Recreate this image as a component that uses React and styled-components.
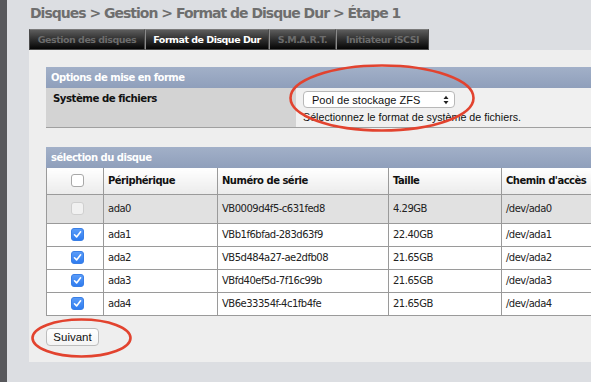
import styled, { createGlobalStyle } from 'styled-components';

const GlobalStyle = createGlobalStyle`
    html, body {
        margin: 0;
        padding: 0;
        background: #dcdee2;
        overflow: hidden;
        font-family: 'DejaVu Sans', Verdana, sans-serif;
    }
`;

const Page = styled.div`
    display: flex;
    width: 591px;
    height: 382px;
    overflow: hidden;
`;

const SideStrip = styled.div`
    width: 7px;
    flex: none;
    background: #58585c;
`;

const Main = styled.div`
    flex: none;
    width: 640px;
    padding-left: 22px;
    display: flex;
    flex-direction: column;
`;

const Title = styled.h1`
    margin: 0;
    height: 29px;
    padding: 5px 0 0 1px;
    box-sizing: border-box;
    font-size: 14px;
    font-weight: bold;
    letter-spacing: -1px;
    color: #6e6e6e;
    white-space: nowrap;
`;

const TabBar = styled.div`
    display: flex;
    height: 21px;
`;

const Tab = styled.div`
    width: ${(p) => p.w}px;
    box-sizing: border-box;
    border: 1px solid #4a4a4a;
    border-top-color: #7a7a7a;
    border-left-color: ${(p) => (p.first ? '#4a4a4a' : '#8a8a8a')};
    background: linear-gradient(#5c5c5c, #2a2a2a 55%, #050505);
    color: ${(p) => (p.active ? '#ffffff' : '#6c6c6c')};
    font-size: 9.5px;
    font-weight: bold;
    letter-spacing: -0.5px;
    display: flex;
    align-items: center;
    justify-content: center;
    white-space: nowrap;
`;

const Panel = styled.div`
    background: #eeeeee;
    height: 312px;
    box-sizing: border-box;
    padding: 17px 0 0 17px;
    display: flex;
    flex-direction: column;
    align-items: flex-start;
`;

const Section = styled.div`
    width: 600px;
    margin-bottom: ${(p) => p.mb || 0}px;
`;

const SectionHead = styled.div`
    height: 21px;
    background: linear-gradient(#a2b0c8, #8f9fbb);
    color: #ffffff;
    font-size: 10px;
    font-weight: bold;
    letter-spacing: -0.5px;
    padding-left: 5px;
    display: flex;
    align-items: center;
`;

const OptionRow = styled.div`
    display: flex;
    height: 40px;
    border-bottom: 1px solid #a0a0a0;
    box-sizing: border-box;
`;

const OptionLabel = styled.div`
    width: 250px;
    background: #d3d3d3;
    font-size: 10.2px;
    font-weight: bold;
    letter-spacing: -0.5px;
    color: #111;
    padding: 5px 0 0 7px;
    box-sizing: border-box;
`;

const OptionValue = styled.div`
    flex: 1;
    background: #f0f0f0;
    padding: 3px 0 0 7px;
    display: flex;
    flex-direction: column;
    align-items: flex-start;
`;

const Marked = styled.div`
    position: relative;
`;

const Ellipse = styled.svg`
    position: absolute;
    left: ${(p) => p.x}px;
    top: ${(p) => p.y}px;
    pointer-events: none;
    overflow: visible;
`;

const Select = styled.div`
    width: 152px;
    height: 17px;
    box-sizing: border-box;
    background: #ffffff;
    border: 1px solid #b8b8b8;
    border-radius: 4px;
    font-family: 'Liberation Sans', Arial, sans-serif;
    font-size: 11px;
    color: #111;
    padding: 0 5px 0 8px;
    display: flex;
    align-items: center;
    justify-content: space-between;
`;

const Hint = styled.div`
    margin-top: 3px;
    font-family: 'Liberation Sans', Arial, sans-serif;
    font-size: 10.7px;
    color: #111;
`;

const Table = styled.table`
    border-collapse: collapse;
    table-layout: fixed;
    width: 600px;
    font-size: 10px;
    letter-spacing: -0.5px;
    color: #222;
`;

const HeadCell = styled.th`
    border: 1px solid #9a9a9a;
    border-top: none;
    background: linear-gradient(#ffffff, #ebebeb);
    height: 26px;
    padding: 0 0 0 4px;
    text-align: ${(p) => (p.center ? 'center' : 'left')};
    font-weight: bold;
    color: #111;
    box-sizing: border-box;
`;

const Row = styled.tr`
    background: ${(p) => (p.disabled ? '#e1e1e1' : '#ffffff')};
    height: ${(p) => p.h}px;
`;

const Cell = styled.td`
    border: 1px solid #9a9a9a;
    padding: 0 0 0 4px;
    text-align: ${(p) => (p.center ? 'center' : 'left')};
    white-space: nowrap;
    overflow: hidden;
`;

const Box = styled.span`
    display: inline-flex;
    align-items: center;
    justify-content: center;
    vertical-align: middle;
    width: 13px;
    height: 13px;
    box-sizing: border-box;
    border-radius: 3px;
    border: 1px solid ${(p) => (p.checked ? '#3a7fe6' : p.disabled ? '#cfcfcf' : '#a8a8a8')};
    background: ${(p) => (p.checked ? 'linear-gradient(#5a9cf8, #2f7cf0)' : p.disabled ? '#f1f1f1' : '#ffffff')};
`;

const Button = styled.button`
    position: relative;
    margin-top: 12px;
    height: 18px;
    width: 53px;
    padding: 0;
    background: linear-gradient(#ffffff, #f4f4f4);
    border: 1px solid #bdbdbd;
    border-radius: 4px;
    font-family: 'Liberation Sans', Arial, sans-serif;
    font-size: 11.5px;
    color: #111;
`;

const Check = ({ checked, disabled }) => (
    <Box checked={checked} disabled={disabled}>
        {checked && (
            <svg width="9" height="9" viewBox="0 0 9 9">
                <path d="M1.5 4.8 L3.6 6.9 L7.6 1.8" fill="none" stroke="#fff" strokeWidth="1.6" strokeLinecap="round" strokeLinejoin="round" />
            </svg>
        )}
    </Box>
);

const RedRing = ({ x, y, w, h }) => (
    <Ellipse x={x} y={y} width={w} height={h}>
        <ellipse cx={w / 2} cy={h / 2} rx={w / 2 - 1.5} ry={h / 2 - 1.5} fill="none" stroke="#e2432f" strokeWidth="2.6" />
    </Ellipse>
);

const disks = [
    { dev: 'ada0', serial: 'VB0009d4f5-c631fed8', size: '4.29GB', disabled: true },
    { dev: 'ada1', serial: 'VBb1f6bfad-283d63f9', size: '22.40GB' },
    { dev: 'ada2', serial: 'VB5d484a27-ae2dfb08', size: '21.65GB' },
    { dev: 'ada3', serial: 'VBfd40ef5d-7f16c99b', size: '21.65GB' },
    { dev: 'ada4', serial: 'VB6e33354f-4c1fb4fe', size: '21.65GB' },
];

const tabs = [
    { label: 'Gestion des disques', w: 116 },
    { label: 'Format de Disque Dur', w: 124, active: true },
    { label: 'S.M.A.R.T.', w: 67 },
    { label: 'Initiateur iSCSI', w: 93 },
];

export default function App() {
    return (
        <Page>
            <GlobalStyle />
            <SideStrip />
            <Main>
                <Title>Disques &gt; Gestion &gt; Format de Disque Dur &gt; Étape 1</Title>
                <TabBar>
                    {tabs.map((t, i) => (
                        <Tab key={t.label} w={t.w} active={t.active} first={i === 0}>
                            {t.label}
                        </Tab>
                    ))}
                </TabBar>
                <Panel>
                    <Section mb={19}>
                        <SectionHead>Options de mise en forme</SectionHead>
                        <OptionRow>
                            <OptionLabel>Système de fichiers</OptionLabel>
                            <OptionValue>
                                <Marked>
                                    <Select>
                                        <span>Pool de stockage ZFS</span>
                                        <svg width="6" height="10" viewBox="0 0 6 10">
                                            <path d="M0.5 4 L3 0.8 L5.5 4 Z M0.5 6 L3 9.2 L5.5 6 Z" fill="#222" />
                                        </svg>
                                    </Select>
                                    <RedRing x={-14} y={-27} w={186} h={68} />
                                </Marked>
                                <Hint>Sélectionnez le format de système de fichiers.</Hint>
                            </OptionValue>
                        </OptionRow>
                    </Section>
                    <Section>
                        <SectionHead>sélection du disque</SectionHead>
                        <Table>
                            <colgroup>
                                <col style={{ width: 57 }} />
                                <col style={{ width: 114 }} />
                                <col style={{ width: 171 }} />
                                <col style={{ width: 113 }} />
                                <col />
                            </colgroup>
                            <thead>
                                <tr>
                                    <HeadCell center>
                                        <Check />
                                    </HeadCell>
                                    <HeadCell>Périphérique</HeadCell>
                                    <HeadCell>Numéro de série</HeadCell>
                                    <HeadCell>Taille</HeadCell>
                                    <HeadCell>Chemin d'accès</HeadCell>
                                </tr>
                            </thead>
                            <tbody>
                                {disks.map((d) => (
                                    <Row key={d.dev} disabled={d.disabled} h={d.disabled ? 29 : 23}>
                                        <Cell center>
                                            <Check checked={!d.disabled} disabled={d.disabled} />
                                        </Cell>
                                        <Cell>{d.dev}</Cell>
                                        <Cell>{d.serial}</Cell>
                                        <Cell>{d.size}</Cell>
                                        <Cell>/dev/{d.dev}</Cell>
                                    </Row>
                                ))}
                            </tbody>
                        </Table>
                    </Section>
                    <Button>
                        Suivant
                        <RedRing x={-16} y={-11} w={101} h={40} />
                    </Button>
                </Panel>
            </Main>
        </Page>
    );
}
